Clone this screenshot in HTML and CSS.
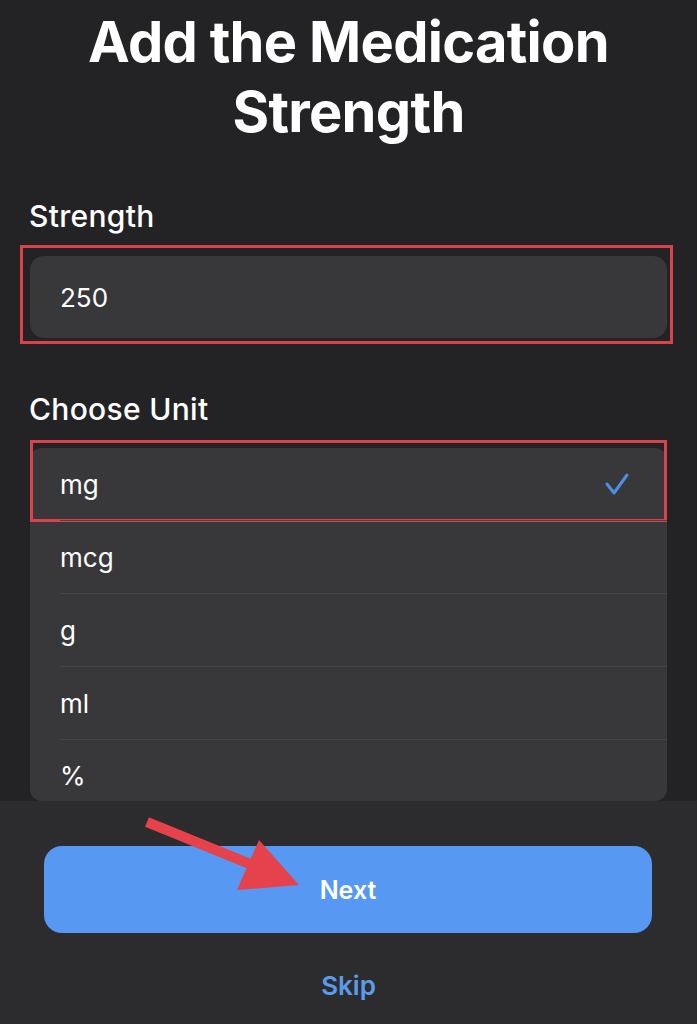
FILE: index.html
```html
<!DOCTYPE html>
<html lang="en">
<head>
<meta charset="utf-8">
<title>Add the Medication Strength</title>
<link rel="stylesheet" href="styles.css">
</head>
<body>
<div class="screen">
  <h1 class="title">Add the Medication<br>Strength</h1>
  <div class="content">
    <div class="label">Strength</div>
    <div class="field annotated-field"><span class="field-value">250</span></div>
    <div class="label label-unit">Choose Unit</div>
    <div class="list">
      <div class="row row-selected">
        <span class="row-text">mg</span>
        <svg class="check" width="26" height="24" viewBox="0 0 26 24"><polyline points="3,12 10,21 23,3" fill="none" stroke="#4b8fe4" stroke-width="3" stroke-linecap="round" stroke-linejoin="round"/></svg>
      </div>
      <div class="row"><span class="row-text">mcg</span></div>
      <div class="row"><span class="row-text">g</span></div>
      <div class="row"><span class="row-text">ml</span></div>
      <div class="row row-last"><span class="row-text">%</span></div>
    </div>
  </div>
  <div class="panel">
    <button class="btn-next">Next</button>
    <div class="skip">Skip</div>
    <svg class="arrow" width="697" height="222" viewBox="0 0 697 222">
      <line x1="147" y1="21" x2="250" y2="63" stroke="#e5424b" stroke-width="10"/>
      <polygon points="259,39 237,89 299,84" fill="#e5424b"/>
    </svg>
  </div>
</div>
</body>
</html>
```
FILE: styles.css
```css
html, body {
  margin: 0;
  padding: 0;
  background: #232325;
}
body {
  font-family: "Inter", "Liberation Sans", sans-serif;
  color: #ffffff;
}
.screen {
  height: 1024px;
  display: flex;
  flex-direction: column;
  overflow: hidden;
}
.title {
  margin: 0;
  padding-top: 7px;
  font-size: 56px;
  line-height: 70px;
  font-weight: 700;
  text-align: center;
  letter-spacing: -0.7px;
}
.content {
  padding: 51px 30px 0 30px;
  display: flex;
  flex-direction: column;
}
.label {
  font-size: 30px;
  line-height: 36px;
  font-weight: 500;
  margin-left: -1px;
  margin-bottom: 22px;
  letter-spacing: 0.3px;
}
.label-unit {
  margin-top: 53px;
  margin-bottom: 21px;
}
.field {
  position: relative;
  height: 82px;
  background: #38383a;
  border-radius: 14px;
  display: flex;
  align-items: center;
  padding-left: 30px;
}
.field-value {
  font-size: 26px;
  font-weight: 400;
}
.annotated-field::after {
  content: "";
  position: absolute;
  top: -11px;
  left: -10px;
  right: -6px;
  bottom: -6px;
  border: 3px solid #d9444c;
}
.list {
  background: #38383a;
  border-radius: 12px;
  display: flex;
  flex-direction: column;
}
.row {
  position: relative;
  height: 72px;
  margin-left: 30px;
  padding-right: 37px;
  display: flex;
  align-items: center;
  justify-content: space-between;
  border-top: 1px solid #444447;
}
.row-selected {
  border-top: none;
}
.row-selected::after {
  content: "";
  position: absolute;
  top: -8px;
  left: -30px;
  right: 0;
  bottom: -2px;
  border: 3px solid #d9444c;
}
.row-last {
  height: 62px;
  align-items: flex-start;
  padding-top: 20px;
  box-sizing: border-box;
}
.row-text {
  font-size: 26px;
  font-weight: 400;
}
.check {
  display: block;
}
.panel {
  position: relative;
  flex: 1;
  background: #2c2c2e;
  display: flex;
  flex-direction: column;
  align-items: center;
  padding-top: 45px;
}
.btn-next {
  width: 608px;
  height: 87px;
  margin-left: -1px;
  border: none;
  border-radius: 18px;
  background: #5698f2;
  color: #ffffff;
  font-family: "Inter", "Liberation Sans", sans-serif;
  font-size: 25px;
  font-weight: 600;
}
.skip {
  margin-top: 38px;
  font-size: 26px;
  line-height: 30px;
  font-weight: 600;
  color: #5b9bea;
}
.arrow {
  position: absolute;
  left: 0;
  top: 0;
  pointer-events: none;
}
```
